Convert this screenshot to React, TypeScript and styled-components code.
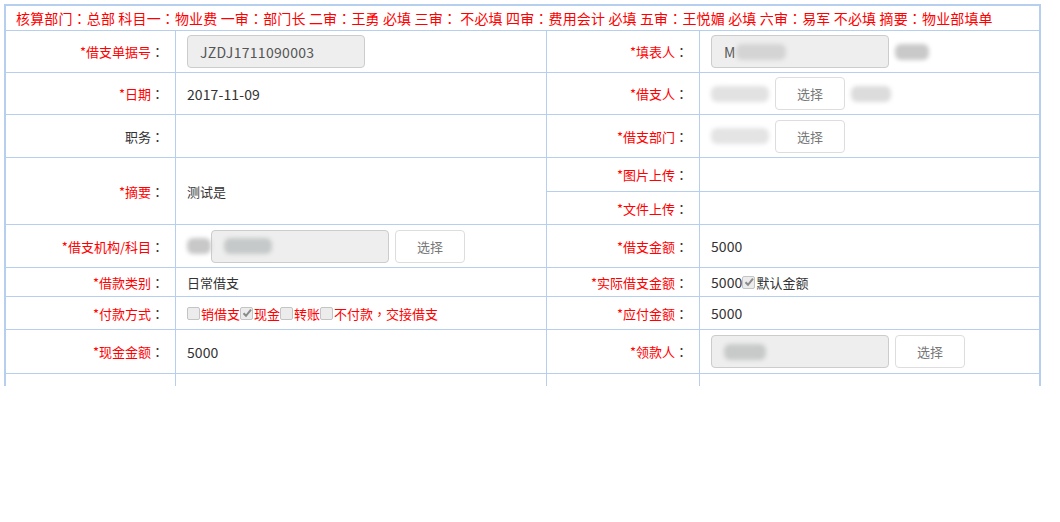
import React from "react";
import styled, { createGlobalStyle } from "styled-components";

const GlobalStyle = createGlobalStyle`
  html, body {
    margin: 0;
    padding: 0;
    background: #fff;
  }
  body {
    font-family: "Microsoft YaHei", "Noto Sans CJK SC", sans-serif;
    font-size: 13px;
    color: #333;
  }
`;

const Page = styled.div`
  box-sizing: border-box;
  height: 386px;
  padding: 4px 0 0 4px;
  overflow: hidden;
`;

const Form = styled.div`
  box-sizing: border-box;
  width: 1037px;
  display: grid;
  grid-template-columns: 169px 370px 152px 339px;
  grid-template-rows: 24px 41px 41px 42px 33px 32px 42px 28px 32px 43px 40px;
  gap: 1px;
  background: #b7cfee;
  border: 2px solid #b7cfee;
`;

const Notice = styled.div`
  grid-column: 1 / -1;
  background: #fff;
  color: #ff0000;
  font-size: 14px;
  line-height: 24px;
  padding-left: 10px;
  letter-spacing: 0.15px;
  white-space: nowrap;
`;

/* centred full-width punctuation, as the original font draws it */
const Punct = styled.span`
  font-family: "Noto Sans CJK TC", "Noto Sans CJK SC", sans-serif;
`;

const Label = styled.div<{ $span?: number }>`
  grid-row: span ${(p) => p.$span || 1};
  background: #fff;
  display: flex;
  align-items: center;
  justify-content: flex-end;
  padding-right: 11px;
  white-space: nowrap;
`;

const Required = styled.span`
  color: #ff0000;
`;

const Value = styled.div<{ $span?: number }>`
  grid-row: span ${(p) => p.$span || 1};
  background: #fff;
  display: flex;
  align-items: center;
  padding-left: 11px;
  white-space: nowrap;
`;

const Digits = styled.span`
  font-size: 14px;
  letter-spacing: 0.1px;
`;

const ReadOnly = styled.div<{ $width?: number }>`
  box-sizing: border-box;
  width: ${(p) => p.$width || 178}px;
  height: 33px;
  display: flex;
  align-items: center;
  padding-left: 12px;
  background: #eeeeee;
  border: 1px solid #cccccc;
  border-radius: 4px;
  color: #555;
  font-size: 14px;
  letter-spacing: 0.3px;
`;

const PickButton = styled.button`
  box-sizing: border-box;
  width: 70px;
  height: 33px;
  margin-left: 6px;
  background: #fff;
  border: 1px solid #dddddd;
  border-radius: 4px;
  color: #777;
  font-family: inherit;
  font-size: 13px;
  padding: 0;
`;

const Blur = styled.span<{ $width: number; $shade?: string }>`
  display: inline-block;
  width: ${(p) => p.$width}px;
  height: 16px;
  background: ${(p) => p.$shade || "#d4d4d4"};
  filter: blur(2px);
  border-radius: 6px;
`;

const Box = styled.span`
  box-sizing: border-box;
  display: inline-flex;
  align-items: center;
  justify-content: center;
  width: 13px;
  height: 13px;
  margin: 0 1px 0 0;
  border: 1px solid #c4c4c4;
  border-radius: 2px;
  background: #ececec;
`;

const Option = styled.span`
  color: #ff0000;
`;

const Check = ({ checked }: { checked?: boolean }) => (
  <Box>
    {checked && (
      <svg width="10" height="10" viewBox="0 0 10 10">
        <path d="M1.5 5.2 L4 7.8 L9 1.6" fill="none" stroke="#8a8a8a" strokeWidth="2" />
      </svg>
    )}
  </Box>
);

const Colon = () => <Punct>：</Punct>;

const Field = ({ text, req = true, span }: { text: string; req?: boolean; span?: number }) => (
  <Label $span={span}>
    {req ? <Required>*{text}</Required> : text}
    <Colon />
  </Label>
);

const notice =
  "核算部门：总部 科目一：物业费 一审：部门长 二审：王勇 必填 三审： 不必填 四审：费用会计 必填 五审：王悦媚 必填 六审：易军 不必填 摘要：物业部填单";

export default function App() {
  return (
    <>
      <GlobalStyle />
      <Page>
        <Form>
          <Notice>
            {notice.split("：").map((part, i) => (
              <React.Fragment key={i}>
                {i > 0 && <Colon />}
                {part}
              </React.Fragment>
            ))}
          </Notice>

          <Field text="借支单据号" />
          <Value>
            <ReadOnly>JZDJ1711090003</ReadOnly>
          </Value>
          <Field text="填表人" />
          <Value>
            <ReadOnly>
              M<Blur $width={50} />
            </ReadOnly>
            <Blur $width={34} $shade="#c9c9c9" style={{ marginLeft: 6 }} />
          </Value>

          <Field text="日期" />
          <Value>
            <Digits>2017-11-09</Digits>
          </Value>
          <Field text="借支人" />
          <Value>
            <Blur $width={58} $shade="#e2e2e2" />
            <PickButton>选择</PickButton>
            <Blur $width={40} $shade="#dcdcdc" style={{ marginLeft: 6 }} />
          </Value>

          <Field text="职务" req={false} />
          <Value />
          <Field text="借支部门" />
          <Value>
            <Blur $width={58} $shade="#e4e4e4" />
            <PickButton>选择</PickButton>
          </Value>

          <Field text="摘要" span={2} />
          <Value $span={2}>测试是</Value>
          <Field text="图片上传" />
          <Value />
          <Field text="文件上传" />
          <Value />

          <Field text="借支机构/科目" />
          <Value>
            <Blur $width={24} $shade="#c8c8c8" />
            <ReadOnly>
              <Blur $width={48} $shade="#c6c9c9" />
            </ReadOnly>
            <PickButton>选择</PickButton>
          </Value>
          <Field text="借支金额" />
          <Value>
            <Digits>5000</Digits>
          </Value>

          <Field text="借款类别" />
          <Value>日常借支</Value>
          <Field text="实际借支金额" />
          <Value>
            <Digits>5000</Digits>
            <Check checked />
            默认金额
          </Value>

          <Field text="付款方式" />
          <Value>
            <Check />
            <Option>销借支</Option>
            <Check checked />
            <Option>现金</Option>
            <Check />
            <Option>转账</Option>
            <Check />
            <Option>
              不付款<Punct>，</Punct>交接借支
            </Option>
          </Value>
          <Field text="应付金额" />
          <Value>
            <Digits>5000</Digits>
          </Value>

          <Field text="现金金额" />
          <Value>
            <Digits>5000</Digits>
          </Value>
          <Field text="领款人" />
          <Value>
            <ReadOnly>
              <Blur $width={42} $shade="#c8c9c9" />
            </ReadOnly>
            <PickButton>选择</PickButton>
          </Value>

          <Value />
          <Value />
          <Value />
          <Value />
        </Form>
      </Page>
    </>
  );
}
